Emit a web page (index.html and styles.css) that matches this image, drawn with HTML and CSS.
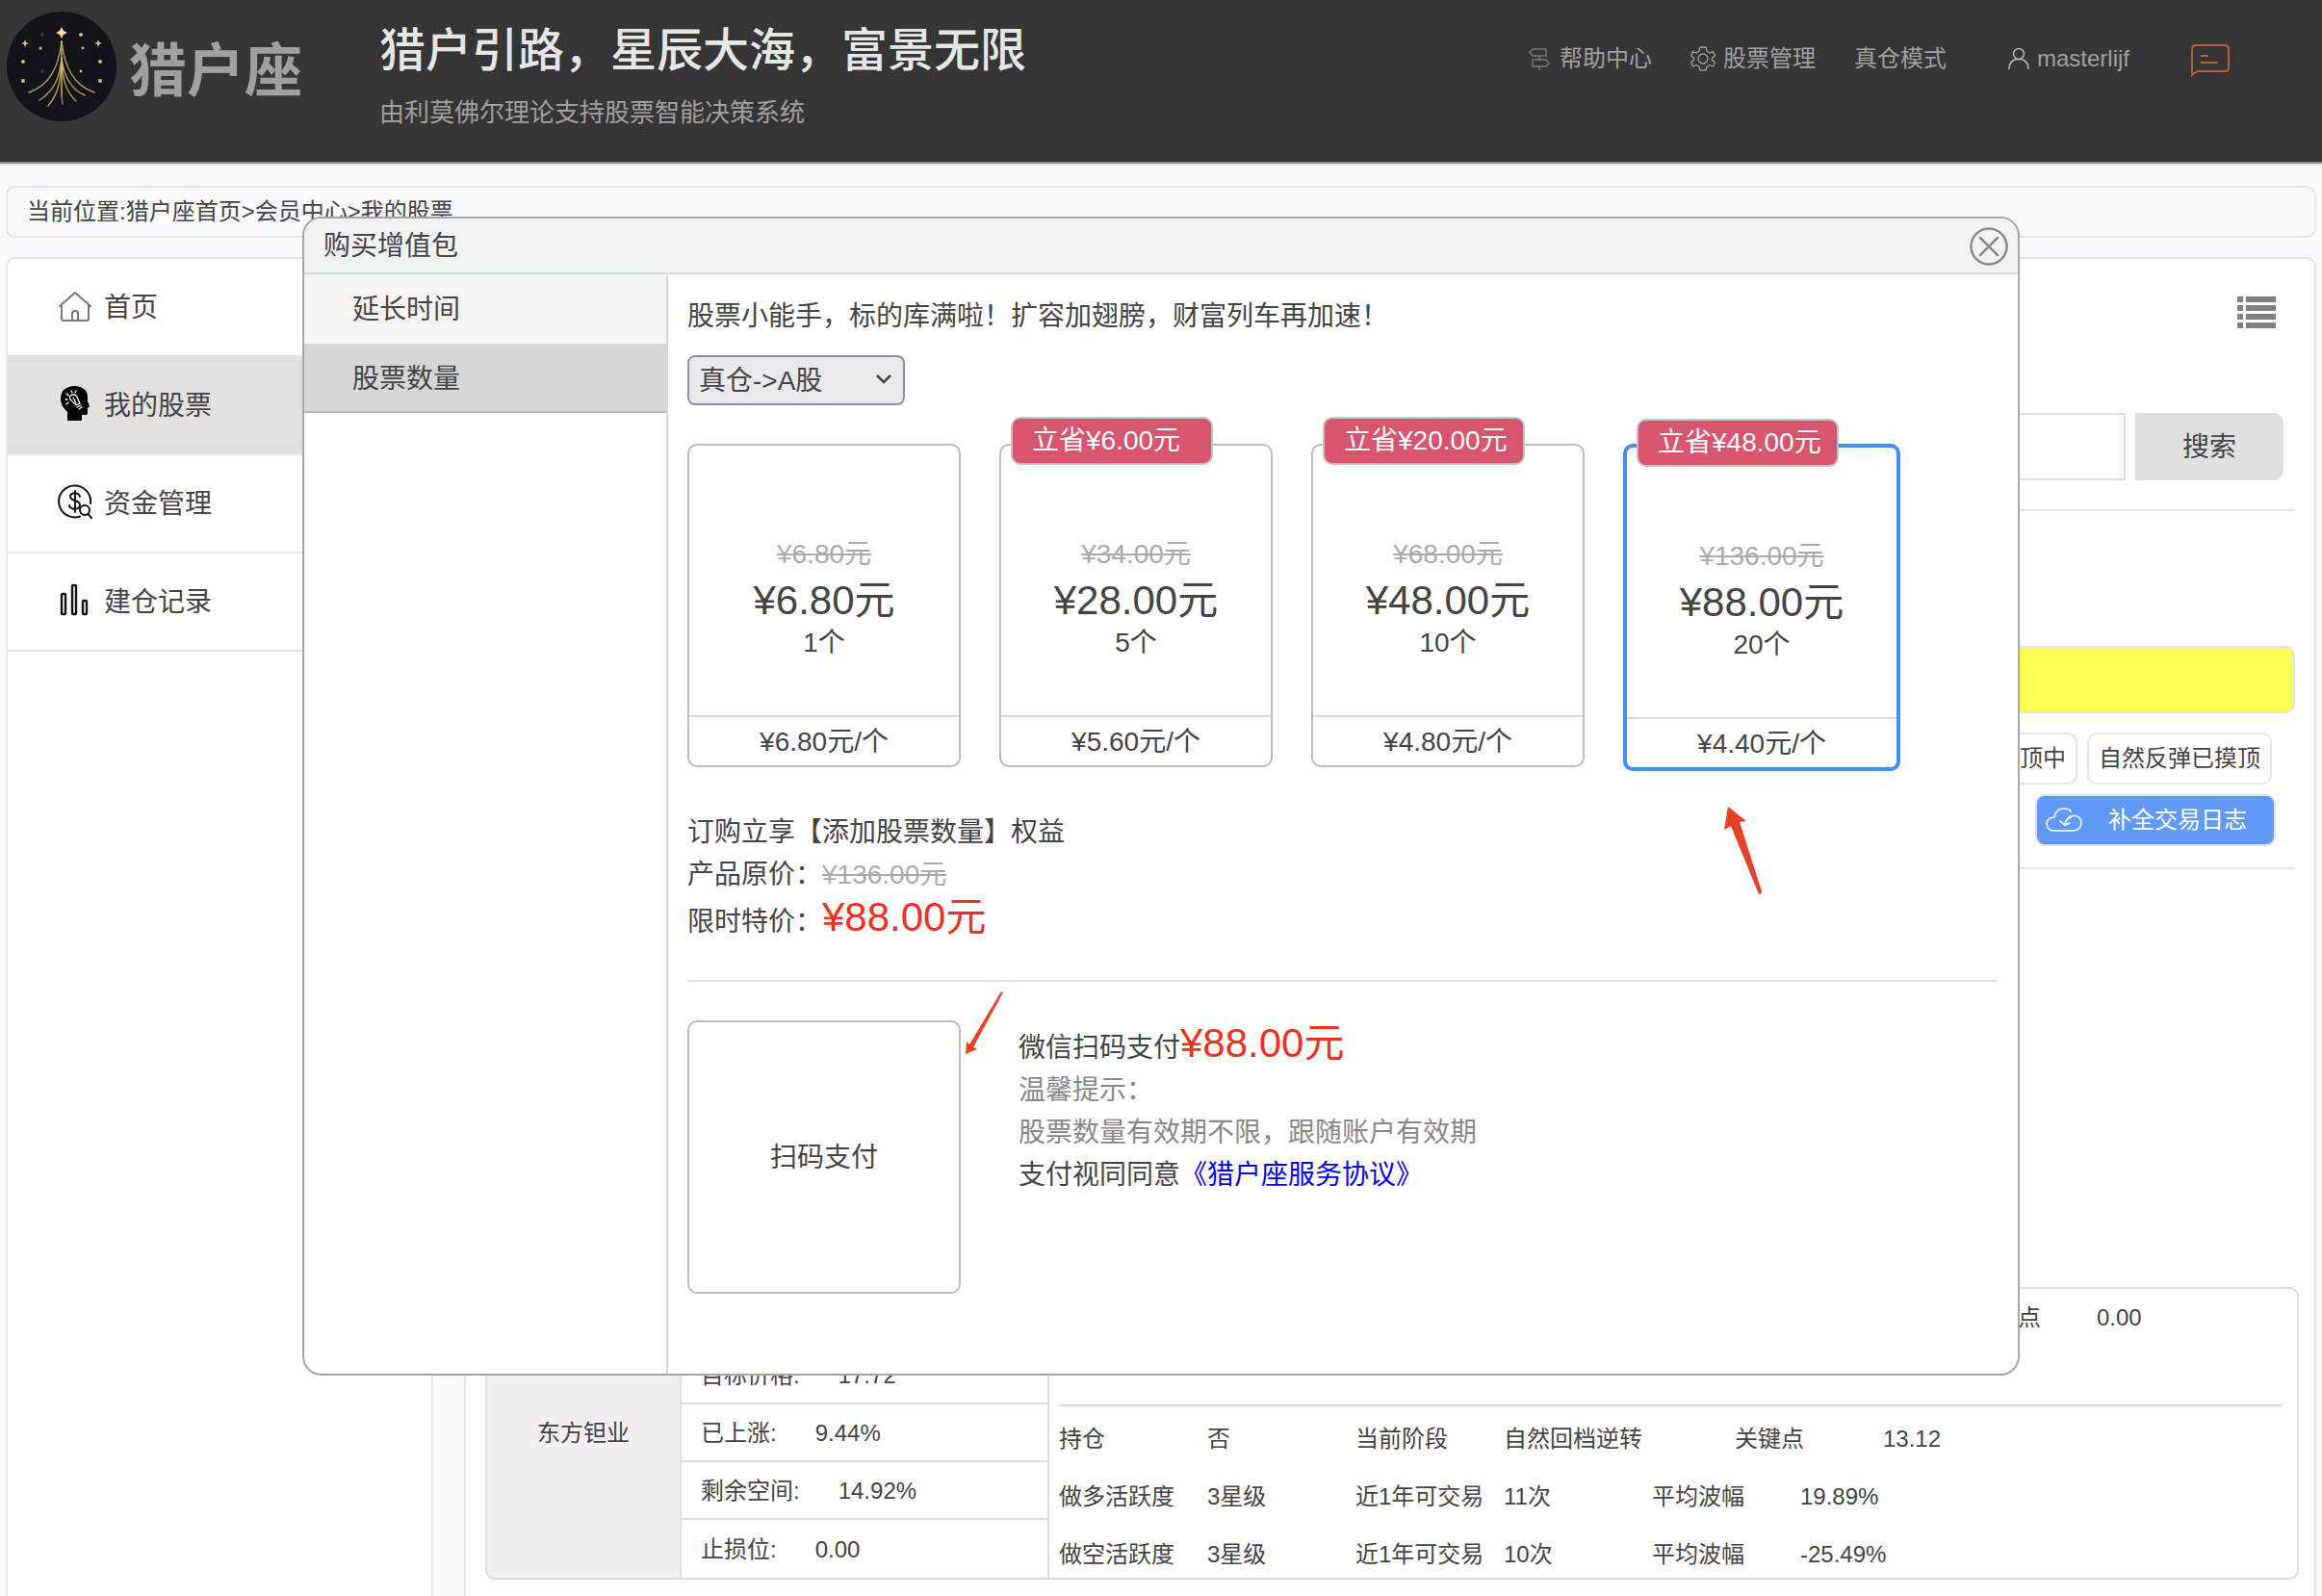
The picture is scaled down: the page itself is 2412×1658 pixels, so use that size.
FILE: index.html
```html
<!DOCTYPE html>
<html lang="zh-CN">
<head>
  <meta charset="UTF-8" />
  <meta name="viewport" content="width=device-width, initial-scale=1" />
  <title>猎户座 - 我的股票</title>
  <link rel="stylesheet" href="styles.css">
</head>
<body>
  <!-- 顶部 -->
  <header class="top">
    <svg class="logo" viewBox="0 0 114 114" aria-hidden="true">
      <circle cx="57" cy="57" r="57" fill="#13131a" />
      <g fill="none" stroke="#b3985a" stroke-width="1.4" stroke-linecap="round">
        <path d="M57 31C54 56 46 76 23 84" />
        <path d="M57 31C60 56 68 76 91 84" />
        <path d="M57 48C55 68 50 82 34 92" />
        <path d="M57 48C59 66 65 80 81 87" />
        <path d="M57 50C56 74 53 86 43 98" />
        <path d="M57 50C58 72 62 84 72 93" />
        <path d="M57 31V88" stroke="#d9b45f" />
        <path d="M57 88L58 96" stroke="#8d8d8d" />
      </g>
      <path d="M57 46L59 60L57 66L55 60Z" fill="#d9b45f" opacity=".8" />
      <path d="M57 16L59 20L63 22L59 24L57 28L55 24L51 22L55 20Z" fill="#ffe0a0" />
      <path d="M19 29L20 32L23 33L20 34L19 37L18 34L15 33L18 32Z" fill="#e3c98e" />
      <path d="M95 29L96 32L99 33L96 34L95 37L94 34L91 33L94 32Z" fill="#e3c98e" />
      <g fill="#d9bd6a">
        <circle cx="77" cy="24" r="2" />
        <circle cx="35" cy="38" r="1.6" />
        <circle cx="79" cy="38" r="1.4" />
        <circle cx="17" cy="52" r="2" />
        <circle cx="97" cy="52" r="2" />
        <circle cx="17" cy="72" r="2" />
        <circle cx="97" cy="72" r="2" />
        <circle cx="77" cy="62" r="1.4" />
      </g>
      <g fill="#3a3a40">
        <circle cx="37" cy="24" r="2" />
        <circle cx="37" cy="62" r="2" />
      </g>
    </svg>
    <div class="brand">猎户座</div>
    <div class="slogan">
      <h1>猎户引路，星辰大海，富景无限</h1>
      <p>由利莫佛尔理论支持股票智能决策系统</p>
    </div>
    <nav class="top-nav">
      <a href="#">
        <svg width="24" height="24" viewBox="0 0 24 24" fill="none" stroke="#777" stroke-width="1.4">
          <path d="M4 2H18V9H4L1 5.500Z M18 13H4V20H18L21 16.500Z M11 9V13 M11 20V24" />
        </svg>
        帮助中心
      </a>
      <a href="#">
        <svg width="26" height="26" viewBox="0 0 26 26" fill="none" stroke="#a0a0a0" stroke-width="1.3" stroke-linejoin="round">
          <path d="M10 1H16L17 5L20 7L23.500 5.500L25.500 10L22.500 12V14.500L25.500 16.500L23.500 21L20 19.500L17 21.500L16 25H10L9 21.500L6 19.500L2.500 21L.7 16.500L3.500 14.500V12L.7 10L2.500 5.500L6 7L9 5Z" />
          <circle cx="13" cy="13" r="5" />
        </svg>
        股票管理
      </a>
      <a href="#">真仓模式</a>
      <a href="#" class="apart">
        <svg width="22" height="24" viewBox="0 0 22 24" fill="none" stroke="#b4b4b4" stroke-width="1.5">
          <circle cx="11" cy="7" r="5.500" />
          <path d="M1 23C1 16 5 12.500 11 12.500S21 16 21 23" />
        </svg>
        masterlijf
      </a>
      <a href="#" class="apart" aria-label="消息">
        <svg width="40" height="38" viewBox="0 -4 40 38" fill="none" stroke="#b5622d" stroke-width="2">
          <path d="M1 32V5Q1 1 5 1H35Q39 1 39 5V24Q39 28 35 28H8Q5 28 1 32Z" />
          <path d="M10 12H18M10 19H28" />
        </svg>
      </a>
    </nav>
  </header>

  <div class="crumbs">当前位置:猎户座首页&gt;会员中心&gt;我的股票</div>

  <div class="page">
    <!-- 左侧菜单 -->
    <nav class="side">
      <a href="#">
        <svg width="36" height="36" viewBox="0 -2 36 36" fill="none" stroke="#777" stroke-width="2" stroke-linejoin="round" stroke-linecap="round">
          <path d="M2 17L18 3L34 17M4 15V30Q4 32 6 32H30Q32 32 32 30V15" />
          <path d="M15 32V25Q15 22 18 22T21 25V32" />
        </svg>
        首页
      </a>
      <a href="#" class="on">
        <svg width="36" height="36" viewBox="0 0 36 36">
          <path d="M10 36V27C6 23 3 19 3 13C3 5 9 0 17 0C25 0 31 4 31 11V16L33 21L31 23V28Q31 30 28 30H25V36Z" fill="#000" />
          <g fill="none" stroke="#fff" stroke-width="1.3" stroke-linecap="round">
            <path d="M13 14Q11 9 16 9Q20 9 21 14L23 18L19 20Z" />
            <path d="M16 12L19 18M20 22L24 20M22 24L25 22M8 14L10 14M9 8L11 10M14 5L15 7M19 5L18 7M9 19L11 17" />
          </g>
        </svg>
        我的股票
      </a>
      <a href="#">
        <svg width="36" height="36" viewBox="0 0 36 36" fill="none" stroke="#111" stroke-width="2" stroke-linecap="round">
          <path d="M34 20A16.500 16.500 0 1 0 23 33.500" />
          <path d="M23 13C22 8 13 8 13 13C13 18 23 16 23 21.500C23 27 13 27 12 22M18 7V29" />
          <circle cx="28" cy="27" r="5" />
          <path d="M31.500 31L35 35" />
        </svg>
        资金管理
      </a>
      <a href="#">
        <svg width="36" height="36" viewBox="0 0 36 36" fill="none" stroke="#111" stroke-width="2.400">
          <rect x="4" y="12" width="4" height="21" rx="1" />
          <rect x="15" y="3" width="4" height="30" rx="1" />
          <rect x="26" y="19" width="4" height="14" rx="1" />
        </svg>
        建仓记录
      </a>
    </nav>

    <!-- 我的股票 -->
    <main class="main">
      <div class="toolbar">
        <button class="list-btn" aria-label="列表">
          <svg width="40" height="33" viewBox="0 0 40 33" fill="#808080">
            <path d="M0 0H6V6H0ZM9 0H40V6H9ZM0 9H6V15H0ZM9 9H40V15H9ZM0 18H6V24H0ZM9 18H40V24H9ZM0 27H6V33H0ZM9 27H40V33H9Z" />
          </svg>
        </button>
      </div>
      <form class="search">
        <input type="text" aria-label="搜索股票" />
        <button type="button">搜索</button>
      </form>
      <div class="filter">
        <div class="notice"></div>
        <div class="tags">
          <span class="tag">自然反弹摸顶中</span>
          <span class="tag">自然反弹已摸顶</span>
        </div>
        <button class="log-btn">
          <svg width="38" height="26" viewBox="0 0 38 26" fill="none" stroke="#dbe7ff" stroke-width="2" stroke-linecap="round" stroke-linejoin="round">
            <path d="M9 24H28C34 24 37 20 37 16C37 8 28 6 23 11M9 24C4 24 1 21 1 17C1 13 4 10 9 10C10 4 14 1 19 1C22 1 25 2 26 4" />
            <path d="M26 10Q21 12 20 17M15 14L20 18L25 16" />
          </svg>
          补全交易日志
        </button>
      </div>

      <section class="stock">
        <div class="stock-name">东方钽业</div>
        <ul class="stock-price">
          <li></li>
          <li><span>目标价格:</span><span>17.72</span></li>
          <li><span>已上涨:</span><span>9.44%</span></li>
          <li><span>剩余空间:</span><span>14.92%</span></li>
          <li><span>止损位:</span><span>0.00</span></li>
        </ul>
        <div class="stock-info">
          <div class="info-group first">
            <div class="info-row last-key"><span>次关键点</span><span>0.00</span></div>
          </div>
          <div class="info-group">
            <div class="info-row"><span>持仓</span><span>否</span><span>当前阶段</span><span class="wide">自然回档逆转</span><span>关键点</span><span>13.12</span></div>
            <div class="info-row"><span>做多活跃度</span><span>3星级</span><span>近1年可交易</span><span>11次</span><span>平均波幅</span><span>19.89%</span></div>
            <div class="info-row"><span>做空活跃度</span><span>3星级</span><span>近1年可交易</span><span>10次</span><span>平均波幅</span><span>-25.49%</span></div>
          </div>
        </div>
      </section>
    </main>
  </div>

  <!-- 购买弹窗 -->
  <div class="modal" role="dialog" aria-labelledby="modalTitle">
    <div class="modal-head">
      <h2 id="modalTitle">购买增值包</h2>
      <button class="close" aria-label="关闭">
        <svg width="40" height="40" viewBox="0 0 40 40" fill="none" stroke="#8a8d8b" stroke-width="2.500" stroke-linecap="round">
          <circle cx="20" cy="20" r="18.500" />
          <path d="M11 11L29 29M29 11L11 29" />
        </svg>
      </button>
    </div>
    <div class="modal-body">
      <nav class="modal-nav">
        <a href="#">延长时间</a>
        <a href="#" class="on">股票数量</a>
      </nav>
      <div class="buy">
        <p class="tip">股票小能手，标的库满啦！扩容加翅膀，财富列车再加速！</p>
        <select class="market" aria-label="市场">
          <option>真仓-&gt;A股</option>
        </select>

        <div class="packs">
          <div class="pack">
            <div class="pack-main">
              <del>¥6.80元</del>
              <strong>¥6.80元</strong>
              <span>1个</span>
            </div>
            <div class="pack-unit">¥6.80元/个</div>
          </div>
          <div class="pack">
            <div class="save">立省¥6.00元</div>
            <div class="pack-main">
              <del>¥34.00元</del>
              <strong>¥28.00元</strong>
              <span>5个</span>
            </div>
            <div class="pack-unit">¥5.60元/个</div>
          </div>
          <div class="pack">
            <div class="save">立省¥20.00元</div>
            <div class="pack-main">
              <del>¥68.00元</del>
              <strong>¥48.00元</strong>
              <span>10个</span>
            </div>
            <div class="pack-unit">¥4.80元/个</div>
          </div>
          <div class="pack active">
            <div class="save">立省¥48.00元</div>
            <div class="pack-main">
              <del>¥136.00元</del>
              <strong>¥88.00元</strong>
              <span>20个</span>
            </div>
            <div class="pack-unit">¥4.40元/个</div>
            <svg class="arrow-pack" width="40" height="92" viewBox="0 0 40 92" fill="#ea4025">
              <path d="M5 0L24 15L17 16L40 88Q40 91 37 91L8 20L1 24Z" />
            </svg>
          </div>
        </div>

        <div class="order">
          <p>订购立享【添加股票数量】权益</p>
          <p>产品原价：<del>¥136.00元</del></p>
          <p>限时特价：<strong class="red">¥88.00元</strong></p>
        </div>

        <div class="pay">
          <div class="qrcode">
            扫码支付
            <svg class="arrow-pay" width="40" height="66" viewBox="0 0 40 66" fill="#ea4025">
              <path d="M37 0L39 1L8 58L12 60L0 65L1 52L4 55Z" />
            </svg>
          </div>
          <div class="pay-text">
            <p>微信扫码支付<strong class="red">¥88.00元</strong></p>
            <p class="gray">温馨提示：</p>
            <p class="gray">股票数量有效期不限，跟随账户有效期</p>
            <p>支付视同同意<a href="#">《猎户座服务协议》</a></p>
          </div>
        </div>
      </div>
    </div>
  </div>
</body>
</html>
```
FILE: styles.css
```css
* {
  box-sizing: border-box;
  margin: 0;
  padding: 0;
}

body {
  display: flex;
  flex-direction: column;
  min-height: 100vh;
  background: #f8f9fc;
  color: #444;
  font-family: "Liberation Sans", "Noto Sans CJK SC", sans-serif;
  font-size: 24px;
  line-height: 28px;
}

a {
  color: inherit;
  text-decoration: none;
}

button,
input,
select {
  font: inherit;
  color: inherit;
}

svg {
  display: block;
  flex: none;
}

/* 顶部 */
.top {
  display: flex;
  align-items: flex-start;
  height: 170px;
  padding: 12px 96px 0 7px;
  background: #363636;
  border-bottom: 2px solid #8c8888;
  box-shadow: 0 2px 0 #e4e5e6;
}

.logo {
  width: 114px;
  height: 114px;
}

.brand {
  width: 260px;
  margin-left: 13px;
  padding-top: 27px;
  font-size: 60px;
  font-weight: 700;
  line-height: 72px;
  color: #a0a0a0;
}

.slogan h1 {
  padding-top: 11px;
  font-size: 48px;
  font-weight: 500;
  line-height: 60px;
  color: #e5e7e5;
}

.slogan p {
  margin-top: 18px;
  font-size: 26px;
  line-height: 32px;
  color: #a0a0a0;
}

.top-nav {
  display: flex;
  gap: 40px;
  margin-left: auto;
  padding-top: 35px;
  color: #a0a0a0;
}

.top-nav a {
  display: flex;
  align-items: center;
  gap: 8px;
  height: 28px;
}

.top-nav .apart {
  margin-left: 24px;
}

/* 当前位置 */
.crumbs {
  margin: 23px 6px 20px;
  padding: 11px 20px;
  border: 2px solid #e4e6e6;
  border-radius: 10px;
}

.page {
  display: flex;
  flex: 1;
  gap: 32px;
  padding: 0 6px;
}

/* 左侧菜单 */
.side {
  width: 444px;
  background: #fff;
  border: 2px solid #e5e5e5;
  border-bottom: 0;
  border-radius: 10px 10px 0 0;
}

.side a {
  display: flex;
  align-items: center;
  gap: 12px;
  height: 102px;
  padding: 2px 0 0 52px;
  border-bottom: 2px solid #e5e5e5;
  font-size: 28px;
}

.side svg {
  margin-bottom: 6px;
}

.side .on {
  background: #e2e1df;
}

/* 主区域 */
.main {
  flex: 1;
  padding: 0 16px 16px 20px;
  background: #fff;
  border: 2px solid #e5e5e5;
  border-bottom: 0;
  border-radius: 10px 10px 0 0;
}

.toolbar {
  display: flex;
  justify-content: flex-end;
  padding: 39px 24px 0 0;
}

.list-btn,
.close {
  background: none;
  border: 0;
  cursor: pointer;
}

.search {
  display: flex;
  gap: 10px;
  margin-right: 4px;
  padding: 88px 12px 30px 0;
  border-bottom: 2px solid #e5e5e5;
}

.search input {
  flex: 1;
  height: 70px;
  padding: 0 20px;
  border: 2px solid #dfdfdf;
  background: #fff;
}

.search button {
  width: 154px;
  height: 70px;
  padding-top: 2px;
  background: #dfdfdf;
  border: 0;
  border-radius: 0 10px 10px 0;
  font-size: 28px;
}

.filter {
  display: flex;
  flex-direction: column;
  align-items: flex-end;
  margin-right: 4px;
  padding: 140px 0 22px;
  border-bottom: 2px solid #e5e5e5;
}

.notice {
  width: 100%;
  height: 70px;
  background: #ffff53;
  border: 2px solid #e2e2e2;
  border-radius: 10px;
}

.tags {
  display: flex;
  gap: 10px;
  margin: 20px 24px 10px 0;
}

.tag {
  padding: 11px 10px;
  border: 2px solid #e5e5e5;
  border-radius: 10px;
}

.log-btn {
  display: flex;
  align-items: center;
  gap: 27px;
  width: 250px;
  height: 54px;
  margin-right: 20px;
  padding-left: 9px;
  background: #6199f8;
  border: 2px solid #dfe3ea;
  border-radius: 10px;
  color: #fff;
}

/* 股票卡片 */
.stock {
  display: flex;
  margin-top: 434px;
  border: 2px solid #dedede;
  border-radius: 10px;
  overflow: hidden;
}

.stock-name {
  display: flex;
  align-items: center;
  justify-content: center;
  width: 202px;
  background: #f1eff0;
  border-right: 2px solid #dedede;
}

.stock-price {
  width: 382px;
  border-right: 2px solid #dedede;
  list-style: none;
}

.stock-price li {
  display: flex;
  align-items: center;
  gap: 40px;
  height: 60px;
  padding: 2px 0 0 20px;
  border-bottom: 2px solid #dedede;
}

.stock-price li:last-child {
  border-bottom: 0;
}

.stock-info {
  flex: 1;
  padding: 0 16px 0 10px;
}

.info-group {
  display: flex;
  flex-direction: column;
  gap: 20px;
  padding-top: 14px;
}

.info-group.first {
  height: 122px;
  padding-top: 10px;
  border-bottom: 2px solid #dedede;
}

.info-row {
  display: flex;
  line-height: 40px;
}

.info-row span {
  width: 154px;
}

.info-row .wide {
  width: 240px;
}

.last-key {
  justify-content: flex-end;
  padding-right: 38px;
}

/* 购买弹窗 */
.modal {
  position: absolute;
  top: 225px;
  left: 314px;
  right: 314px;
  background: #fff;
  border: 2px solid #a5a7a6;
  border-radius: 20px;
  overflow: hidden;
  font-size: 28px;
  line-height: 44px;
}

.modal-head {
  display: flex;
  align-items: center;
  justify-content: space-between;
  height: 58px;
  padding: 2px 10px 0 20px;
  background: #f1f3f2;
  border-bottom: 2px solid #d6dcde;
}

.modal-head h2 {
  font-size: 28px;
  font-weight: 400;
}

.modal-body {
  display: flex;
}

.modal-nav {
  width: 378px;
  border-right: 2px solid #d6dadb;
}

.modal-nav a {
  display: block;
  height: 72px;
  padding-left: 50px;
  background: #f4f3f1;
  line-height: 74px;
}

.modal-nav .on {
  background: #d6d6d6;
  border-bottom: 2px solid #b9bcbb;
}

.buy {
  flex: 1;
  padding: 22px 22px 83px 20px;
}

.market {
  display: block;
  width: 226px;
  height: 52px;
  margin: 18px 0 40px;
  padding: 2px 10px 0;
  appearance: none;
  background: #e9e9ed url("data:image/svg+xml,%3Csvg xmlns='http://www.w3.org/2000/svg' width='16' height='10' fill='none' stroke='%23444' stroke-width='2.500'%3E%3Cpath d='M1 1l7 7 7-7'/%3E%3C/svg%3E") no-repeat right 12px top 18px;
  border: 2px solid #8f8f9d;
  border-radius: 8px;
}

.packs {
  display: flex;
  align-items: flex-start;
  gap: 40px;
  min-height: 340px;
}

.pack {
  position: relative;
  border: 2px solid #c4baba;
  border-radius: 10px;
}

.pack.active {
  border: 4px solid #448ef7;
}

.pack-main {
  display: flex;
  flex-direction: column;
  align-items: center;
  width: 280px;
  height: 280px;
  padding-top: 91px;
}

.pack-main strong,
.red {
  font-size: 42px;
  font-weight: 400;
}

.pack-main strong {
  line-height: 52px;
}

.pack-main span {
  line-height: 36px;
}

del {
  color: #aaa;
}

.red {
  color: #ea3323;
}

.pack-unit {
  height: 52px;
  border-top: 2px solid #d6dcde;
  line-height: 52px;
  text-align: center;
}

.save {
  position: absolute;
  top: -30px;
  left: 10px;
  width: 210px;
  padding: 0 20px;
  background: #d85570;
  border: 2px solid #c8c0c0;
  border-radius: 10px;
  color: #fff;
  line-height: 46px;
  white-space: nowrap;
}

.arrow-pack {
  position: absolute;
  left: 100px;
  top: 373px;
}

.order {
  padding: 42px 0 38px;
  border-bottom: 2px solid #e2e3e3;
}

/* 支付 */
.pay {
  display: flex;
  gap: 60px;
  padding-top: 40px;
}

.qrcode {
  position: relative;
  display: flex;
  align-items: center;
  justify-content: center;
  width: 284px;
  height: 284px;
  padding-top: 2px;
  border: 2px solid #c4baba;
  border-radius: 10px;
}

.arrow-pay {
  position: absolute;
  left: 287px;
  top: -32px;
}

.gray {
  color: #888;
}

.pay-text {
  padding-top: 2px;
}

.pay-text a {
  color: #0000ee;
}
```
